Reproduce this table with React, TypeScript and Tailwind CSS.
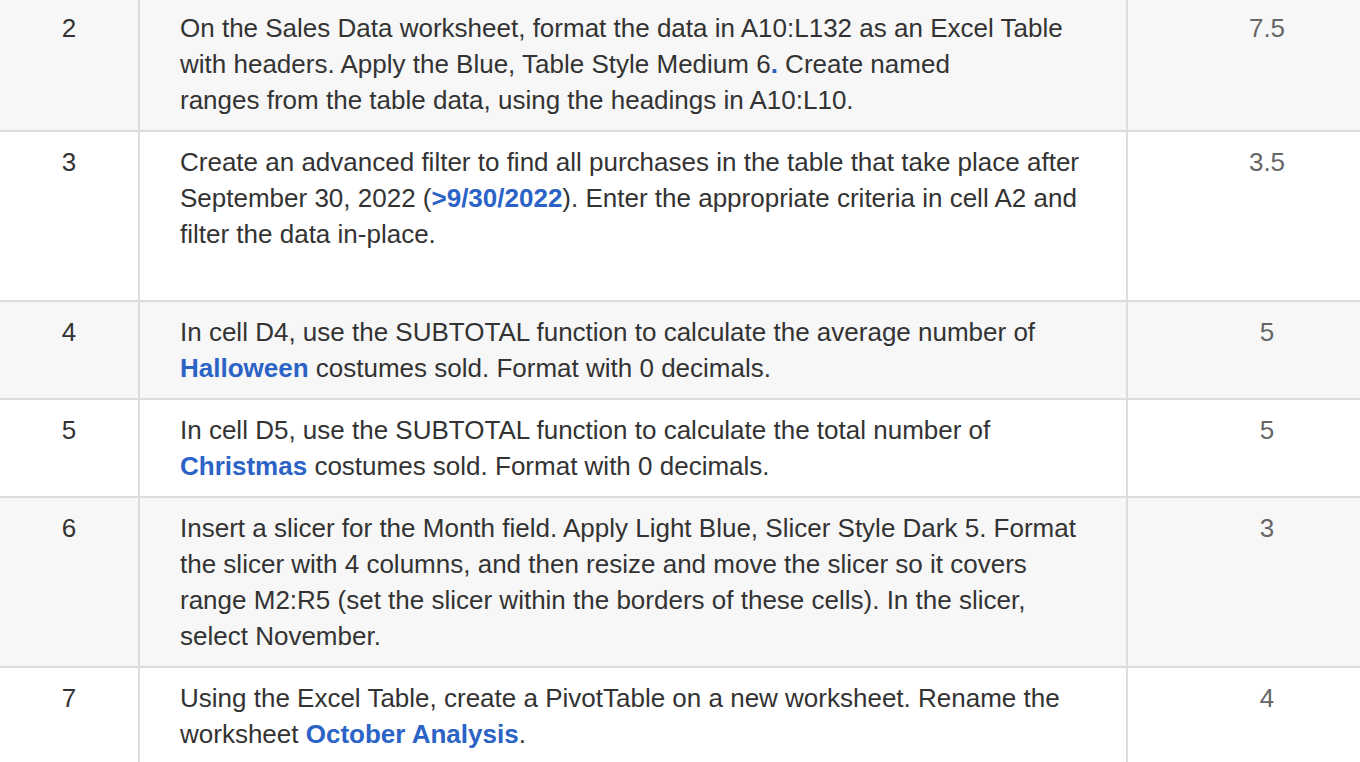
type Row = {
  n: number;
  pts: string;
  content: React.ReactNode;
  extraLine?: boolean;
};

function B({ children }: { children: React.ReactNode }) {
  return <span className="font-bold text-[#2b63c6]">{children}</span>;
}

const rows: Row[] = [
  {
    n: 2,
    pts: "7.5",
    content: (
      <>
        On the Sales Data worksheet, format the data in A10:L132 as an Excel Table
        <br />
        with headers. Apply the Blue, Table Style Medium 6<B>.</B> Create named
        <br />
        ranges from the table data, using the headings in A10:L10.
      </>
    ),
  },
  {
    n: 3,
    pts: "3.5",
    extraLine: true,
    content: (
      <>
        Create an advanced filter to find all purchases in the table that take place after
        <br />
        September 30, 2022 (<B>&gt;9/30/2022</B>). Enter the appropriate criteria in cell A2 and
        <br />
        filter the data in-place.
      </>
    ),
  },
  {
    n: 4,
    pts: "5",
    content: (
      <>
        In cell D4, use the SUBTOTAL function to calculate the average number of
        <br />
        <B>Halloween</B> costumes sold. Format with 0 decimals.
      </>
    ),
  },
  {
    n: 5,
    pts: "5",
    content: (
      <>
        In cell D5, use the SUBTOTAL function to calculate the total number of
        <br />
        <B>Christmas</B> costumes sold. Format with 0 decimals.
      </>
    ),
  },
  {
    n: 6,
    pts: "3",
    content: (
      <>
        Insert a slicer for the Month field. Apply Light Blue, Slicer Style Dark 5. Format
        <br />
        the slicer with 4 columns, and then resize and move the slicer so it covers
        <br />
        range M2:R5 (set the slicer within the borders of these cells). In the slicer,
        <br />
        select November.
      </>
    ),
  },
  {
    n: 7,
    pts: "4",
    content: (
      <>
        Using the Excel Table, create a PivotTable on a new worksheet. Rename the
        <br />
        worksheet <B>October Analysis</B>.
      </>
    ),
  },
];

export default function App() {
  return (
    <div
      className="h-[762px] w-[1360px] overflow-hidden bg-white"
      style={{ fontFamily: '"Liberation Sans", Arial, Helvetica, sans-serif' }}
    >
      <div className="-mt-[2px] w-[1406px]">
        {rows.map((r, i) => (
          <div
            key={r.n}
            className={`flex border-b-2 border-[#dddddd] text-[26px] leading-[36px] ${
              i % 2 === 0 ? "bg-[#f7f7f7]" : "bg-white"
            }`}
          >
            <div className="w-[138px] shrink-0 pt-3 pb-3 text-center text-[#333333]">{r.n}</div>
            <div className="w-[990px] shrink-0 border-x-2 border-[#dddddd] pl-10 pr-4 pt-3 pb-3 text-[#333333]">
              {r.content}
              {r.extraLine && <div className="h-[36px]" />}
            </div>
            <div className="flex-1 pt-3 pb-3 text-center text-[#666666]">{r.pts}</div>
          </div>
        ))}
      </div>
    </div>
  );
}
